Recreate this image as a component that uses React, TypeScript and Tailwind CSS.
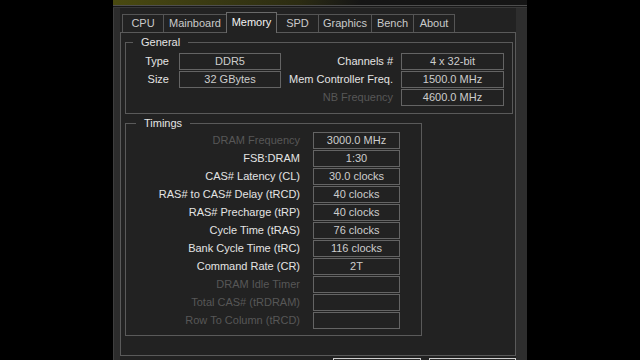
const tabs = [
  { label: "CPU", w: "w-[42px]" },
  { label: "Mainboard", w: "w-[64px]" },
  { label: "Memory", w: "w-[51px]" },
  { label: "SPD", w: "w-[43px]" },
  { label: "Graphics", w: "w-[54px]" },
  { label: "Bench", w: "w-[43px]" },
  { label: "About", w: "w-[42px]" },
];

const timings = [
  { label: "DRAM Frequency", value: "3000.0 MHz", dim: true },
  { label: "FSB:DRAM", value: "1:30" },
  { label: "CAS# Latency (CL)", value: "30.0 clocks" },
  { label: "RAS# to CAS# Delay (tRCD)", value: "40 clocks" },
  { label: "RAS# Precharge (tRP)", value: "40 clocks" },
  { label: "Cycle Time (tRAS)", value: "76 clocks" },
  { label: "Bank Cycle Time (tRC)", value: "116 clocks" },
  { label: "Command Rate (CR)", value: "2T" },
  { label: "DRAM Idle Timer", value: "", dim: true },
  { label: "Total CAS# (tRDRAM)", value: "", dim: true },
  { label: "Row To Column (tRCD)", value: "", dim: true },
];

function Box({ value, w }: { value: string; w: string }) {
  return (
    <div
      className={`${w} h-[17px] border border-[#646464] flex items-center justify-center text-[#cdcdcd] leading-none`}
    >
      {value}
    </div>
  );
}

function Label({ text, w, dim }: { text: string; w: string; dim?: boolean }) {
  return (
    <div
      className={`${w} text-right leading-none whitespace-nowrap ${dim ? "text-[#575757]" : "text-[#e4e4e4]"}`}
    >
      {text}
    </div>
  );
}

export default function App() {
  return (
    <div className="w-[640px] h-[360px] bg-black overflow-hidden font-['Liberation_Sans',Arial,sans-serif] text-[11px]">
      <div className="ml-[113px] w-[414px] h-[360px] overflow-hidden bg-[#222222]">
        {/* title strip */}
        <div className="h-[5px] bg-linear-to-r from-[#4a4a10] via-[#2c2c12] via-45% to-[#151515] to-60%" />
        <div className="h-px bg-[#4e4e4e]" />
        <div className="h-px bg-[#181818]" />
        <div className="h-px bg-[#383838]" />

        <div className="flex">
          <div className="w-[7px] bg-[#2c2c2c] border-l border-[#3e3e3e]" />

          <div className="w-[396px] flex flex-col">
            {/* tabs */}
            <div className="h-[24px] flex items-end pl-[2px]">
              {tabs.map((t, i) => {
                const active = t.label === "Memory";
                return (
                  <div
                    key={t.label}
                    className={`${t.w} ${i > 0 ? "-ml-px" : ""} ${
                      active
                        ? "relative z-10 h-[21px] -mb-px bg-[#222222] text-[#f2f2f2] border-x border-t border-[#6a6a6a] pb-[2px]"
                        : "h-[18px] text-[#cacaca] border-x border-t border-[#555555]"
                    } flex items-center justify-center leading-none whitespace-nowrap`}
                  >
                    {t.label}
                  </div>
                );
              })}
            </div>

            {/* page */}
            <div className="h-[324px] border border-[#5a5a5a] pt-[3px] pl-[4px]">
              <fieldset className="w-[388px] border border-[#5a5a5a] pb-[7px]">
                <legend className="ml-[7px] px-[8px] leading-[13px] text-[#e4e4e4]">General</legend>
                <div className="mt-[4px] flex">
                  <div className="flex flex-col gap-px">
                    <div className="flex items-center">
                      <Label text="Type" w="w-[43px]" />
                      <div className="ml-[10px]">
                        <Box value="DDR5" w="w-[102px]" />
                      </div>
                    </div>
                    <div className="flex items-center">
                      <Label text="Size" w="w-[43px]" />
                      <div className="ml-[10px]">
                        <Box value="32 GBytes" w="w-[102px]" />
                      </div>
                    </div>
                  </div>
                  <div className="flex flex-col gap-px">
                    <div className="flex items-center">
                      <Label text="Channels #" w="w-[112px]" />
                      <div className="ml-[8px]">
                        <Box value="4 x 32-bit" w="w-[103px]" />
                      </div>
                    </div>
                    <div className="flex items-center">
                      <Label text="Mem Controller Freq." w="w-[112px]" />
                      <div className="ml-[8px]">
                        <Box value="1500.0 MHz" w="w-[103px]" />
                      </div>
                    </div>
                    <div className="flex items-center">
                      <Label text="NB Frequency" w="w-[112px]" dim />
                      <div className="ml-[8px]">
                        <Box value="4600.0 MHz" w="w-[103px]" />
                      </div>
                    </div>
                  </div>
                </div>
              </fieldset>

              <fieldset className="mt-[3px] w-[297px] border border-[#5a5a5a] pb-[6px]">
                <legend className="ml-[10px] px-[8px] leading-[13px] text-[#e4e4e4]">Timings</legend>
                <div className="mt-[2px] flex flex-col gap-px">
                  {timings.map((r) => (
                    <div key={r.label} className="flex items-center">
                      <Label text={r.label} w="w-[174px]" dim={r.dim} />
                      <div className="ml-[13px]">
                        <Box value={r.value} w="w-[87px]" />
                      </div>
                    </div>
                  ))}
                </div>
              </fieldset>
            </div>

            {/* bottom buttons, cut off by the window edge */}
            <div className="mt-[2px] flex">
              <div className="ml-[213px] w-[88px] h-[22px] border border-[#cfcfcf] bg-[#2a2a2a]" />
              <div className="ml-[8px] w-[88px] h-[22px] border border-[#cfcfcf] bg-[#2a2a2a]" />
            </div>
          </div>

          <div className="w-[11px] bg-[#2e2e2e]" />
        </div>
      </div>
    </div>
  );
}
